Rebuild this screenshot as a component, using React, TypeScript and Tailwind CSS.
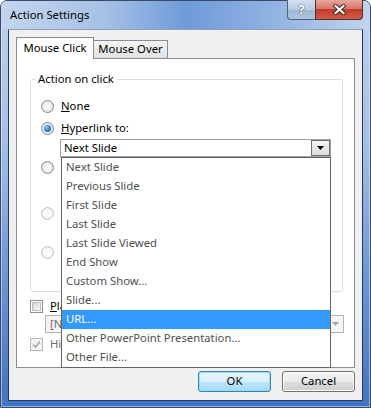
import React from "react";

function Radio({ checked = false, disabled = false }: { checked?: boolean; disabled?: boolean }) {
  return (
    <span
      className={`flex h-[13px] w-[13px] shrink-0 items-center justify-center rounded-full border ${
        disabled
          ? "border-[#c2c2c2] bg-[radial-gradient(circle_at_50%_50%,#fbfbfb_30%,#ececec_100%)]"
          : "border-[#8a8a8a] bg-[radial-gradient(circle_at_50%_50%,#fafafa_25%,#d2d2d2_100%)]"
      }`}
    >
      {checked && (
        <span className="h-[7px] w-[7px] rounded-full bg-[radial-gradient(circle_at_40%_35%,#9bd6ff_0%,#2b86d8_45%,#0b4a8c_100%)]" />
      )}
    </span>
  );
}

function Checkbox({ checked = false, disabled = false }: { checked?: boolean; disabled?: boolean }) {
  if (disabled) {
    return (
      <span className="flex h-[13px] w-[13px] shrink-0 items-center justify-center border border-[#b8b8b8] bg-[#f4f4f4]">
        {checked && (
          <svg width="9" height="9" viewBox="0 0 9 9">
            <path d="M1 4.5 L3.5 7 L8 1.5" fill="none" stroke="#a6a6a6" strokeWidth="1.6" />
          </svg>
        )}
      </span>
    );
  }
  return (
    <span className="flex h-[13px] w-[13px] shrink-0 border border-[#8e8f8f] bg-white p-[1px]">
      <span className="block h-full w-full border border-[#bdbdbd] bg-[linear-gradient(135deg,#d6d6d6,#f7f7f7)]" />
    </span>
  );
}

function Arrow({ color }: { color: string }) {
  return (
    <svg width="7" height="4" viewBox="0 0 7 4">
      <path d="M0 0 H7 L3.5 4 Z" fill={color} />
    </svg>
  );
}

const items = [
  "Next Slide",
  "Previous Slide",
  "First Slide",
  "Last Slide",
  "Last Slide Viewed",
  "End Show",
  "Custom Show...",
  "Slide...",
  "URL...",
  "Other PowerPoint Presentation...",
  "Other File...",
];

export default function App() {
  return (
    <div className="h-[408px] w-[371px] font-['Noto_Sans',sans-serif] text-[11.3px] text-black">
      <div className="flex h-full flex-col rounded-t-[7px] border border-[#3a4b67] bg-[linear-gradient(to_bottom,#bfd2ec_0%,#a4c0e6_35%,#7099d6_65%,#4173c4_100%)] shadow-[inset_0_0_0_1px_rgba(255,255,255,0.45)]">
        {/* Title bar */}
        <div className="flex h-[28px] shrink-0 items-center rounded-t-[6px] bg-[linear-gradient(to_right,#c4d6ee_0%,#a6c1e6_28%,#6f9bd8_50%,#8eb0e2_72%,#c2d4ed_100%)]">
          <div className="pl-[9px] text-[11.3px] text-black">Action Settings</div>
          <div className="-mt-px ml-auto mr-[7px] flex self-start">
            <div className="flex h-[20px] w-[28px] items-center justify-center rounded-bl-[4px] border border-t-0 border-r-0 border-[#4e5f7c] bg-[linear-gradient(to_bottom,#d3dfef_0%,#b9cae2_50%,#9db4d4_51%,#b2c5de_100%)]">
              <span className="text-[13px] font-bold leading-none text-white [text-shadow:0_0_1px_#2b3445,0_0_1px_#2b3445]">?</span>
            </div>
            <div className="flex h-[20px] w-[48px] items-center justify-center rounded-br-[4px] border border-t-0 border-[#4e3030] bg-[linear-gradient(to_bottom,#e8a89d_0%,#d5786a_45%,#c23a28_50%,#d35b46_100%)]">
              <svg width="13" height="11" viewBox="0 0 13 11">
                <path d="M2.5 2 L10.5 9 M10.5 2 L2.5 9" stroke="#3b2420" strokeWidth="4.2" strokeLinecap="square" />
                <path d="M2.5 2 L10.5 9 M10.5 2 L2.5 9" stroke="#ffffff" strokeWidth="2.2" strokeLinecap="square" />
              </svg>
            </div>
          </div>
        </div>

        {/* Client area */}
        <div className="mx-[7px] mb-[6px] flex flex-1 flex-col border border-[#23385e] border-t-[#8fa0b8] bg-[#f0f0f0] px-[7px] pt-[7px]">
          {/* Tabs */}
          <div className="flex h-[21px] items-end">
            <div className="relative z-10 -mb-px flex h-[22px] w-[78px] items-center justify-center border border-b-0 border-[#898c95] bg-white">
              Mouse Click
            </div>
            <div className="-ml-px flex h-[18px] w-[75px] items-center justify-center border border-b-0 border-[#898c95] bg-[linear-gradient(to_bottom,#f3f3f3,#e2e2e2)]">
              Mouse Over
            </div>
          </div>

          {/* Panel */}
          <div className="relative flex h-[310px] flex-col border border-[#898c95] bg-white">
            {/* Group box */}
            <div className="relative ml-[13px] mt-[20px] flex h-[213px] w-[313px] flex-col rounded-[3px] border border-[#d5dfe5]">
              <span className="absolute -top-[9px] left-[4px] bg-white px-[3px] leading-[16px]">Action on click</span>

              <div className="mt-[18px] flex h-[16px] items-center gap-[7px] pl-[10px]">
                <Radio />
                <span>
                  <span className="underline">N</span>one
                </span>
              </div>
              <div className="mt-[6px] flex h-[16px] items-center gap-[7px] pl-[10px]">
                <Radio checked />
                <span>
                  <span className="underline">H</span>yperlink to:
                </span>
              </div>

              {/* Combo */}
              <div className="relative ml-[29px] mt-[3px] flex h-[18px] w-[271px] border border-[#a0a0a0] bg-white">
                <div className="flex flex-1 items-center pl-[3px]">Next Slide</div>
                <div className="flex h-full w-[19px] items-center justify-center border border-[#707070] bg-[linear-gradient(to_bottom,#f4f4f4,#dcdcdc)]">
                  <Arrow color="#000" />
                </div>

                {/* Dropdown list */}
                <div className="absolute left-[0px] top-[17px] z-20 w-[270px] border border-[#646464] bg-white">
                  {items.map((it) => (
                    <div
                      key={it}
                      className={`flex h-[19px] items-center pl-[4px] ${
                        it === "URL..." ? "bg-[#3399ff] text-white" : "text-[#4f4f4f]"
                      }`}
                    >
                      {it}
                    </div>
                  ))}
                </div>
              </div>

              <div className="mt-[2px] flex h-[16px] items-center pl-[10px]">
                <Radio />
              </div>
              <div className="mt-[30px] flex h-[16px] items-center pl-[10px]">
                <Radio disabled />
              </div>
              <div className="mt-[23px] flex h-[16px] items-center pl-[10px]">
                <Radio disabled />
              </div>
            </div>

            {/* Play sound */}
            <div className="ml-[13px] mt-[6px] flex h-[16px] items-center gap-[7px]">
              <Checkbox />
              <span>
                <span className="underline">P</span>lay sound:
              </span>
            </div>
            <div className="ml-[28px] mt-[1px] flex h-[18px] w-[299px] border border-[#b4b4b4] bg-[#f4f4f4]">
              <div className="flex flex-1 items-center pl-[4px] text-[#6d6d6d]">[No Sound]</div>
              <div className="flex h-full w-[16px] items-center justify-center">
                <Arrow color="#a3a3a3" />
              </div>
            </div>

            {/* Highlight click */}
            <div className="ml-[13px] mt-[3px] flex h-[16px] items-center gap-[7px]">
              <Checkbox checked disabled />
              <span className="text-[#6d6d6d]">Highlight click</span>
            </div>
          </div>

          {/* Buttons */}
          <div className="mt-[3px] flex justify-end gap-[11px]">
            <div className="flex h-[21px] w-[73px] items-center justify-center rounded-[3px] border border-[#3c7fb1] bg-[linear-gradient(to_bottom,#eaf6fd_0%,#d9f0fc_50%,#bee6fd_51%,#a7d9f5_100%)] shadow-[inset_0_0_0_1px_#8ee0ff]">
              OK
            </div>
            <div className="flex h-[21px] w-[73px] items-center justify-center rounded-[3px] border border-[#707070] bg-[linear-gradient(to_bottom,#f2f2f2_0%,#ebebeb_50%,#dddddd_51%,#cfcfcf_100%)] shadow-[inset_0_0_0_1px_#fcfcfc]">
              Cancel
            </div>
          </div>
        </div>
      </div>
    </div>
  );
}
